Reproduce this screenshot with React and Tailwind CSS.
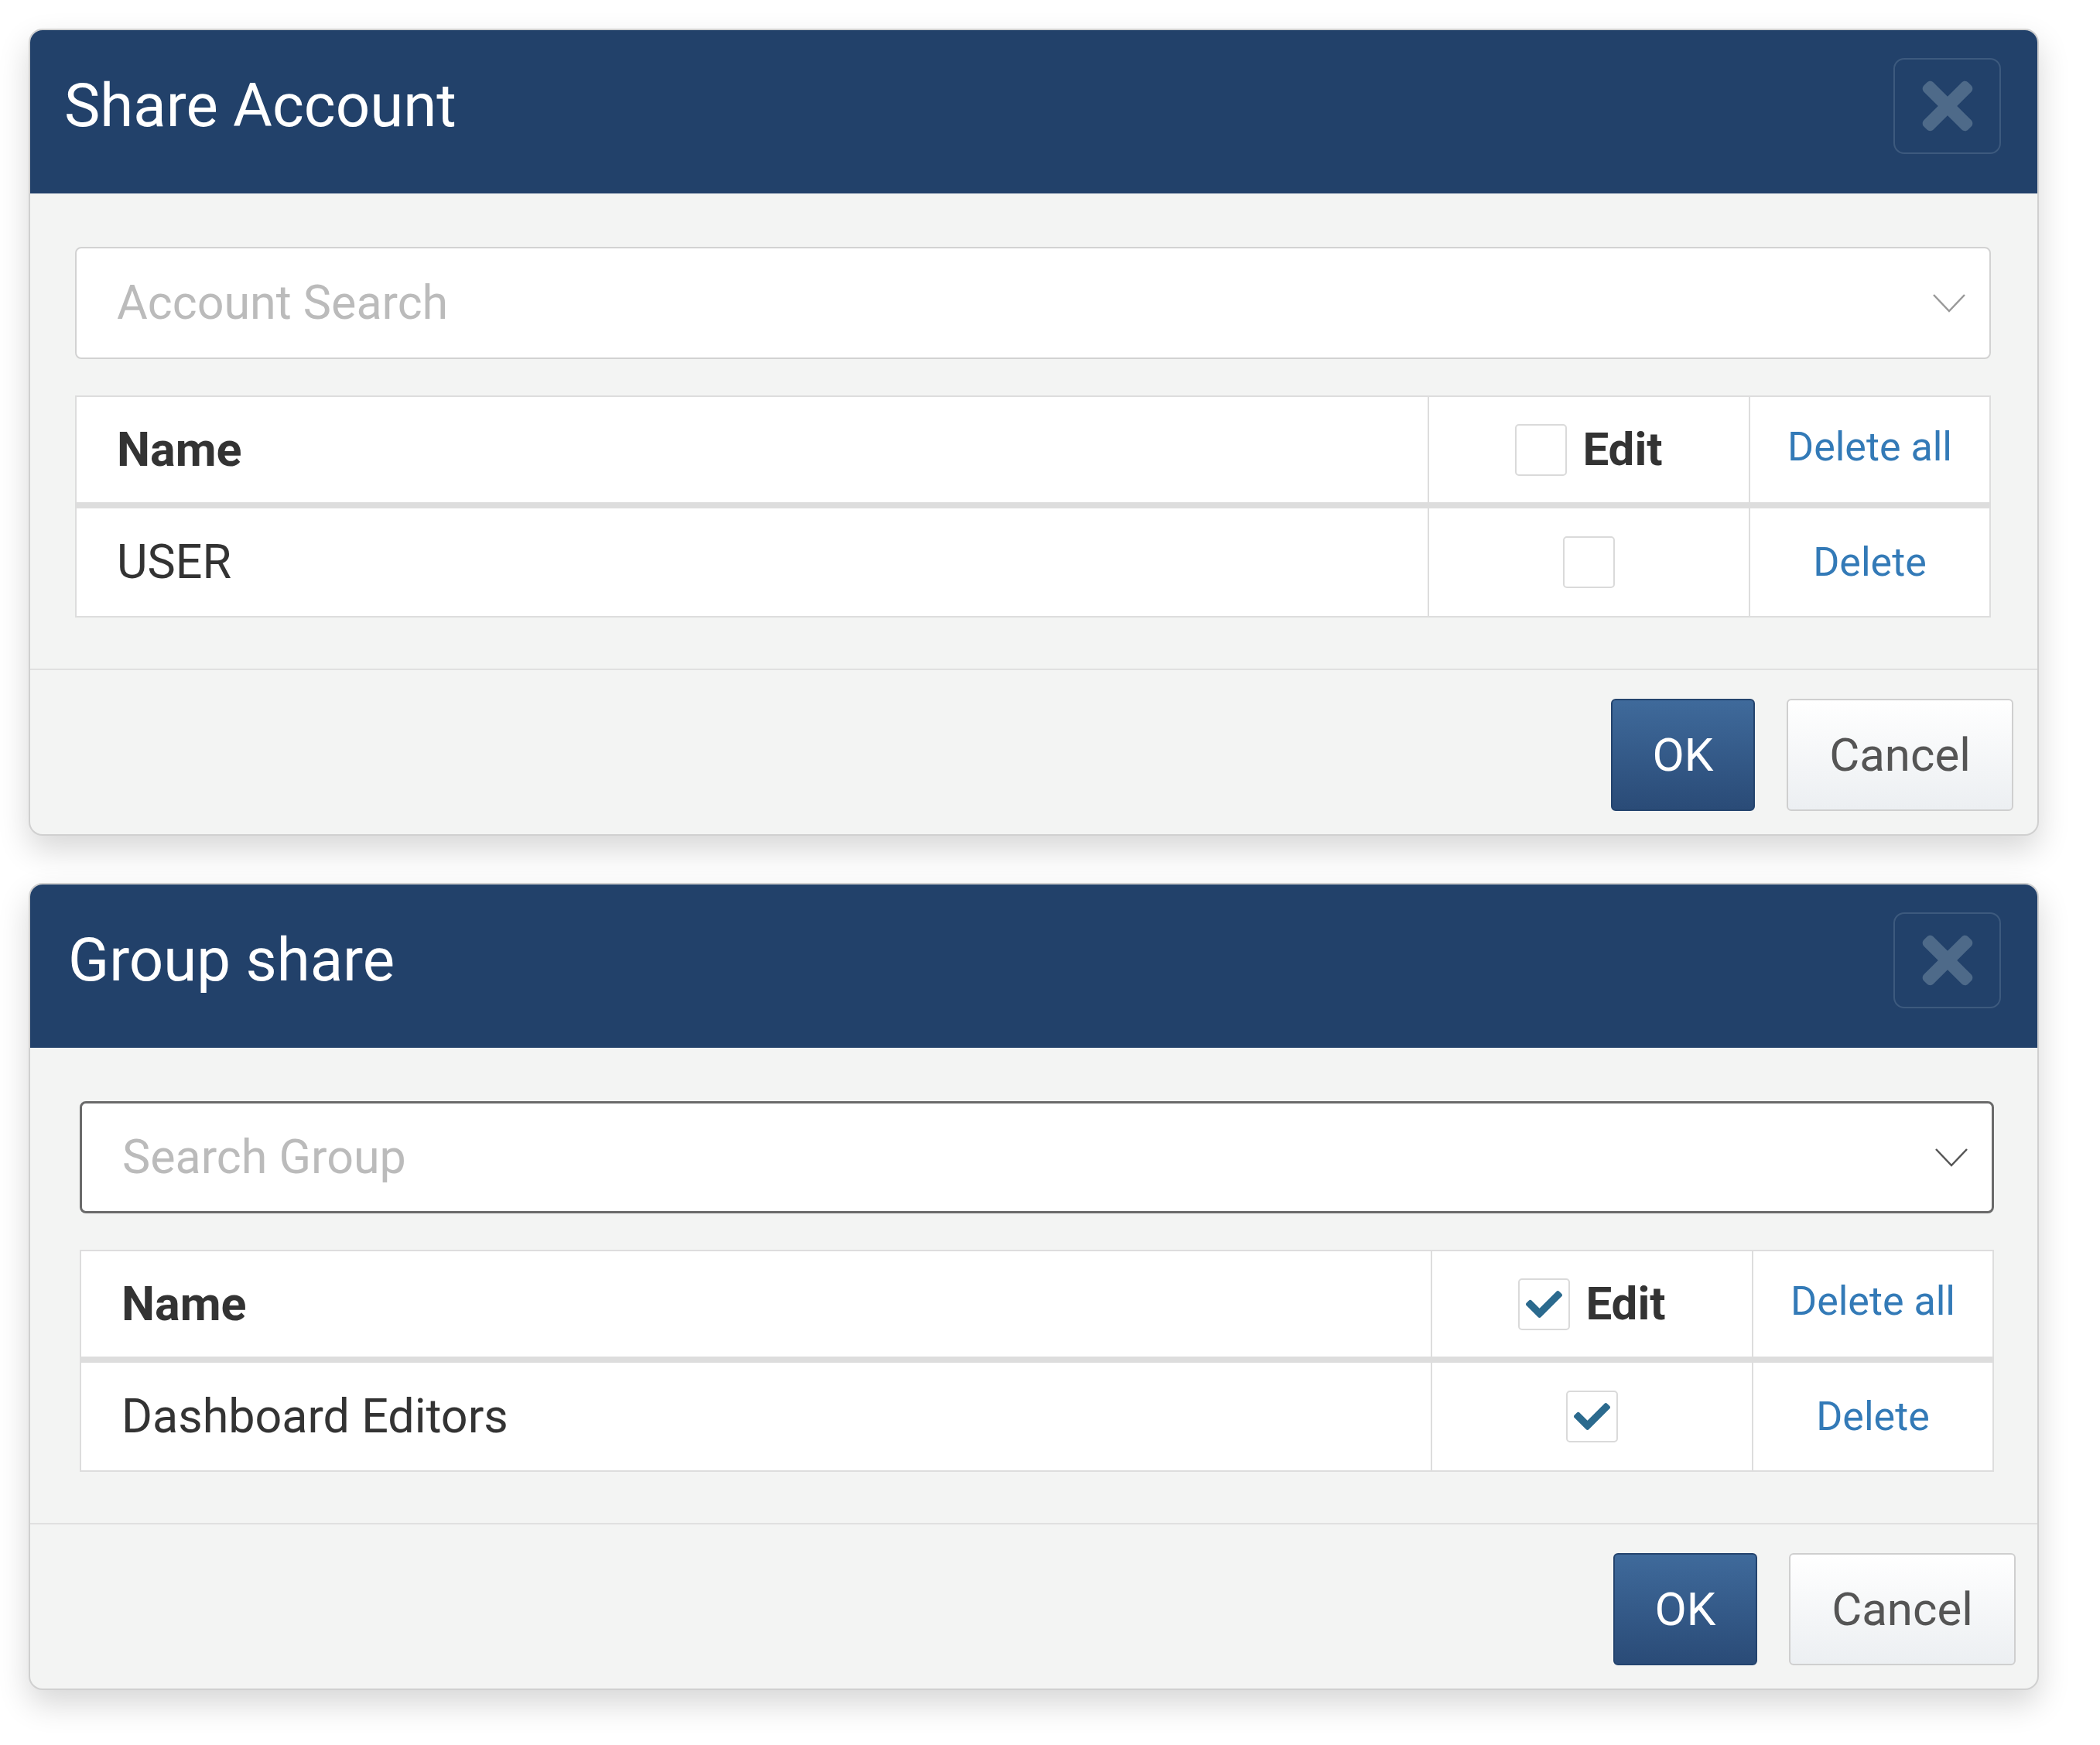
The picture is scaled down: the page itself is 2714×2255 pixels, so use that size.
import { FaTimes, FaCheck } from "react-icons/fa";

function Checkbox({ checked }) {
  return (
    <span className="flex h-[67px] w-[67px] items-center justify-center rounded-[5px] border-2 border-[#dadada] bg-white">
      {checked && <FaCheck size={47} className="text-[#2b6a8e]" />}
    </span>
  );
}

function Chevron({ dark }) {
  return (
    <svg width="44" height="26" viewBox="0 0 44 26" fill="none">
      <polyline
        points="2,2 22,23 42,2"
        stroke={dark ? "#555" : "#999"}
        strokeWidth="2.5"
      />
    </svg>
  );
}

function Dialog({ title, placeholder, focused, checked, rowName, shifted }) {
  return (
    <div className="w-[2598px] overflow-hidden rounded-[18px] border-2 border-[#d0d0d0] bg-[#f3f4f3] shadow-[0_18px_40px_rgba(0,0,0,0.16)]">
      {/* header */}
      <div className={"flex h-[211px] items-center justify-between bg-[#22416a] pb-[16px] pr-[47px] " + (shifted ? "pl-[49px]" : "pl-[44px]")}>
        <h2 className="text-[78px] leading-none font-normal text-white">{title}</h2>
        <button className="flex h-[124px] w-[139px] items-center justify-center rounded-[14px] border-2 border-[#3d5a7e]">
          <FaTimes size={94} className="text-[#4e6a89]" />
        </button>
      </div>

      {/* body */}
      <div className={"pt-[69px] pb-[66px] " + (shifted ? "pl-[64px] pr-[56px]" : "pl-[58px] pr-[60px]")}>
        <div
          className={
            "flex h-[145px] items-center justify-between rounded-[8px] bg-white pl-[52px] pr-[30px] " +
            (focused ? "border-[3px] border-[#6a6a6a]" : "border-2 border-[#d2d2d2]")
          }
        >
          <span className="text-[61px] leading-none text-[#bbbbbb]">{placeholder}</span>
          <Chevron dark={focused} />
        </div>

        <div className="mt-[47px] border-2 border-[#dddddd] bg-white">
          <div className="grid h-[144px] grid-cols-[1fr_415px_311px] border-b-[8px] border-[#dddddd]">
            <div className="flex items-center pl-[52px] text-[61px] leading-none font-bold text-[#333]">Name</div>
            <div className="flex items-center justify-center gap-[20px] border-l-2 border-[#dddddd]">
              <Checkbox checked={checked} />
              <span className="text-[60px] leading-none font-bold text-[#333]">Edit</span>
            </div>
            <div className="flex items-center justify-center border-l-2 border-[#dddddd] pb-[6px]">
              <a className="text-[52px] leading-none text-[#337ab7]">Delete all</a>
            </div>
          </div>
          <div className="grid h-[139px] grid-cols-[1fr_415px_311px]">
            <div className="flex items-center pl-[52px] text-[61px] leading-none text-[#333]">{rowName}</div>
            <div className="flex items-center justify-center border-l-2 border-[#dddddd]">
              <Checkbox checked={checked} />
            </div>
            <div className="flex items-center justify-center border-l-2 border-[#dddddd]">
              <a className="text-[52px] leading-none text-[#337ab7]">Delete</a>
            </div>
          </div>
        </div>
      </div>

      {/* footer */}
      <div className={"flex justify-end gap-[41px] border-t-2 border-[#e0e0e0] pt-[37px] pb-[30px] " + (shifted ? "pr-[28px]" : "pr-[31px]")}>
        <button className="flex h-[145px] w-[186px] items-center justify-center rounded-[6px] border-2 border-[#24446e] bg-gradient-to-b from-[#3f6a9b] to-[#2a4b77] text-[60px] leading-none text-white">
          OK
        </button>
        <button className="flex h-[145px] w-[293px] items-center justify-center rounded-[6px] border-2 border-[#cfcfcf] bg-gradient-to-b from-[#ffffff] to-[#eceff2] text-[60px] leading-none text-[#555]">
          Cancel
        </button>
      </div>
    </div>
  );
}

export default function App() {
  return (
    <div className="min-h-[2255px] bg-white pl-[37px] pt-[37px] [font-family:Roboto,'Liberation_Sans',sans-serif]">
      <div className="flex flex-col gap-[61px]">
        <Dialog title="Share Account" placeholder="Account Search" rowName="USER" />
        <Dialog title="Group share" placeholder="Search Group" rowName="Dashboard Editors" focused checked shifted />
      </div>
    </div>
  );
}
